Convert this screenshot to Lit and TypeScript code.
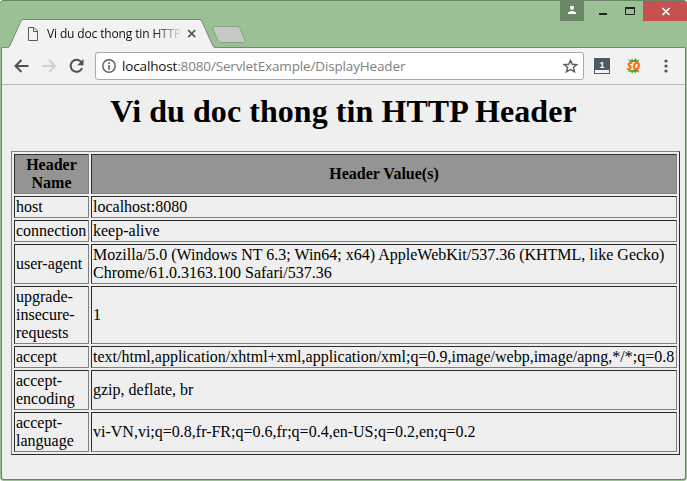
import { LitElement, html, css, svg } from "lit";
import { customElement } from "lit/decorators.js";

const HEADERS: [string, string][] = [
  ["host", "localhost:8080"],
  ["connection", "keep-alive"],
  ["user-agent", "Mozilla/5.0 (Windows NT 6.3; Win64; x64) AppleWebKit/537.36 (KHTML, like Gecko) Chrome/61.0.3163.100 Safari/537.36"],
  ["upgrade-insecure-requests", "1"],
  ["accept", "text/html,application/xhtml+xml,application/xml;q=0.9,image/webp,image/apng,*/*;q=0.8"],
  ["accept-encoding", "gzip, deflate, br"],
  ["accept-language", "vi-VN,vi;q=0.8,fr-FR;q=0.6,fr;q=0.4,en-US;q=0.2,en;q=0.2"],
];

@customElement("browser-titlebar")
export class BrowserTitlebar extends LitElement {
  static styles = css`
    :host { display: block; position: relative; height: 48px; }
    .shape { position: absolute; left: 0; top: 0; display: block; }
    .strip { position: relative; display: flex; align-items: flex-start; height: 48px; }
    .tab { display: flex; align-items: center; height: 28px; width: 213px; margin-top: 20px; padding-left: 28px; box-sizing: border-box; }
    .page { display: block; flex: none; }
    .title {
      margin-left: 9px; width: 133px; overflow: hidden; white-space: nowrap;
      font: 12px/18px "Open Sans", "Noto Sans", sans-serif; letter-spacing: -0.14px; color: #111;
      -webkit-mask-image: linear-gradient(90deg, #000 106px, transparent 137px);
      mask-image: linear-gradient(90deg, #000 106px, transparent 137px);
    }
    .close-tab { margin-left: 7px; flex: none; }
    .controls { display: flex; margin-left: auto; padding-top: 1px; height: 20px; }
    .controls svg { display: block; }
  `;
  render() {
    return html`
      <svg class="shape" width="687" height="48">
        <path d="M2 47.5H7.5Q9 47.5 9.7 46L21 21Q21.8 19.5 23 19.5H199.5Q201 19.5 201.7 21L213 46Q213.8 47.5 215 47.5H685V49H2Z" fill="#f2f2f2" stroke="#6f8d6a"/>
        <path d="M214 26.5H237Q239 26.5 240 28.5L245 40Q246 42.5 244 42.5H221Q219 42.5 218 40.5L213 29Q212 26.5 214 26.5Z" fill="#c4cbc3" stroke="#86a381"/>
      </svg>
      <div class="strip">
        <div class="tab">
          <svg class="page" width="10" height="14" fill="none" stroke="#5a5a5a"><path d="M.5.5H6L9.5 4V13.5H.5ZM5.5.5V4.5H9.5"/></svg>
          <span class="title">Vi du doc thong tin HTTP Header</span>
          <svg class="close-tab" width="10" height="10" stroke="#5a5a5a" stroke-width="1.8"><path d="M1.2 1.2 8.2 8.2M8.2 1.2 1.2 8.2"/></svg>
        </div>
        <div class="controls">
          <svg width="24" height="20"><path fill="#6a8667" d="M0 0H24V20H0Z"/><circle cx="12" cy="6.8" r="2.1" fill="#fff"/><path d="M8 13V11.5Q9 10 12 10T16 11.5V13Z" fill="#fff"/></svg>
          <svg width="59" height="20"><path fill="#222" d="M15 12H23V14H15Z"/><path d="M41.5 7H50.5V13.5H41.5Z" fill="none" stroke="#222"/><path d="M41 6H51V8H41Z" fill="#222"/></svg>
          <svg width="44" height="20"><path fill="#c75050" d="M0 0H41Q44 0 44 3V20H0Z"/><path d="M19.5 7 26.5 14M26.5 7 19.5 14" stroke="#fff" stroke-width="1.7"/></svg>
        </div>
      </div>`;
  }
}

@customElement("browser-toolbar")
export class BrowserToolbar extends LitElement {
  static styles = css`
    :host { display: block; height: 36px; background: #f2f2f2; border-bottom: 1px solid #b6b6b6; }
    .bar { display: flex; align-items: center; height: 36px; padding-left: 11px; }
    svg { display: block; flex: none; }
    .nav { display: flex; gap: 12px; align-items: center; }
    .omnibox {
      display: flex; align-items: center; box-sizing: border-box; width: 489px; height: 28px;
      margin-left: 10px; padding: 0 5px 0 6px; background: #fff; border: 1px solid #a9a9a9; border-radius: 3px;
    }
    .url { margin-left: 6px; font: 13.5px/20px "Open Sans", "Noto Sans", sans-serif; letter-spacing: -0.15px; color: #808080; white-space: nowrap; }
    .host { color: #111; }
    .star { margin-left: auto; }
    .ext { margin-left: 10px; }
    .sq { margin-left: 16px; }
    .more { margin-left: 22px; }
    .badge { font: bold 9px "Liberation Sans", sans-serif; fill: #fff; }
    .logo { font: italic 800 10.5px "Open Sans", sans-serif; fill: #ff6a00; }
  `;
  render() {
    return html`<div class="bar">
      <div class="nav">
        <svg width="17" height="16" fill="none" stroke="#505050" stroke-width="2"><path d="M15.5 8H3M8.5 2 2.5 8 8.5 14"/></svg>
        <svg width="15" height="16" fill="none" stroke="#d0d0d0" stroke-width="2"><path d="M0 8H12.5M7 2 13 8 7 14"/></svg>
        <svg width="16" height="16" fill="none" stroke="#505050" stroke-width="2"><path d="M12.3 4A6 6 0 1 0 13.2 10"/><path d="M14.5 1V7.2H8.3Z" fill="#505050" stroke="none"/></svg>
      </div>
      <div class="omnibox">
        <svg width="14" height="14"><circle cx="7" cy="7" r="6.2" fill="none" stroke="#5a5a5a" stroke-width="1.4"/><path d="M6.2 3.3H7.8V4.9H6.2ZM6.2 6H7.8V10.8H6.2Z" fill="#5a5a5a"/></svg>
        <span class="url"><span class="host">localhost</span>:8080/ServletExample/DisplayHeader</span>
        <svg class="star" width="15" height="14" fill="none" stroke="#5a5a5a" stroke-width="1.4"><path d="M7.5 1.4 9.3 5.3 13.8 5.7 10.4 8.5 11.5 12.8 7.5 10.5 3.5 12.8 4.6 8.5 1.2 5.7 5.7 5.3Z"/></svg>
      </div>
      <svg class="ext" width="16" height="16"><path d="M0 0H16V16H0Z" fill="#4d5a62"/><path d="M1 12H15V15H1Z" fill="#f4f4f4"/><text class="badge" x="5.5" y="9.5">1</text></svg>
      <svg class="sq" width="16" height="16"><path d="M2 1 5 2.5 6 .5 7.5 2.5 10 0 10.5 2.5 13.5 1.5 12 4H4ZM3 12H12L13.5 14.5 10.5 13.5 9.5 15.5 8 13.5 6 15.5 5 13.5 2 14Z" fill="#4fa02c"/><text class="logo" x=".8" y="11.8" textLength="13.6" lengthAdjust="spacingAndGlyphs">SQ</text></svg>
      <svg class="more" width="4" height="14" fill="#505050">${[2, 7, 12].map((y) => svg`<circle cx="2" cy=${y} r="1.6"/>`)}</svg>
    </div>`;
  }
}

@customElement("header-table")
export class HeaderTable extends LitElement {
  static styles = css`
    table {
      width: 669px; table-layout: fixed; box-sizing: border-box; border-collapse: separate; border-spacing: 2px;
      border: 1px solid; border-color: #808080 #2c2c2c #2c2c2c #808080;
      font: 16px/18px "Liberation Serif", "Times New Roman", serif; color: #000;
    }
    th, td { padding: 1px; border: 1px solid; border-color: #2c2c2c #808080 #808080 #2c2c2c; text-align: left; vertical-align: middle; }
    th { background: #949494; text-align: center; font-weight: bold; }
    .name { width: 71px; }
  `;
  render() {
    return html`<table>
      <thead><tr><th class="name">Header Name</th><th>Header Value(s)</th></tr></thead>
      <tbody>${HEADERS.map(([name, value]) => html`<tr><td>${name}</td><td>${value}</td></tr>`)}</tbody>
    </table>`;
  }
}

@customElement("app-root")
export class AppRoot extends LitElement {
  static styles = css`
    :host { display: block; background: #fff; }
    .window {
      box-sizing: border-box; width: 687px; height: 481px; overflow: hidden; background: #9bc095;
      border-radius: 4px; box-shadow: inset 0 1px #6a8667;
    }
    .body { box-sizing: border-box; height: 432px; margin: 0 1px 1px; border: 1px solid #6a8667; border-top: 0; border-radius: 0 0 3px 3px; background: #efefef; overflow: hidden; }
    .heading { margin: 8px 0 21px; font: bold 32px/37px "Liberation Serif", "Times New Roman", serif; letter-spacing: 0.06px; text-align: center; color: #000; }
    .content { padding: 0 9px; }
  `;
  render() {
    return html`<div class="window">
      <browser-titlebar></browser-titlebar>
      <div class="body">
        <browser-toolbar></browser-toolbar>
        <div class="content">
          <h1 class="heading">Vi du doc thong tin HTTP Header</h1>
          <header-table></header-table>
        </div>
      </div>
    </div>`;
  }
}
